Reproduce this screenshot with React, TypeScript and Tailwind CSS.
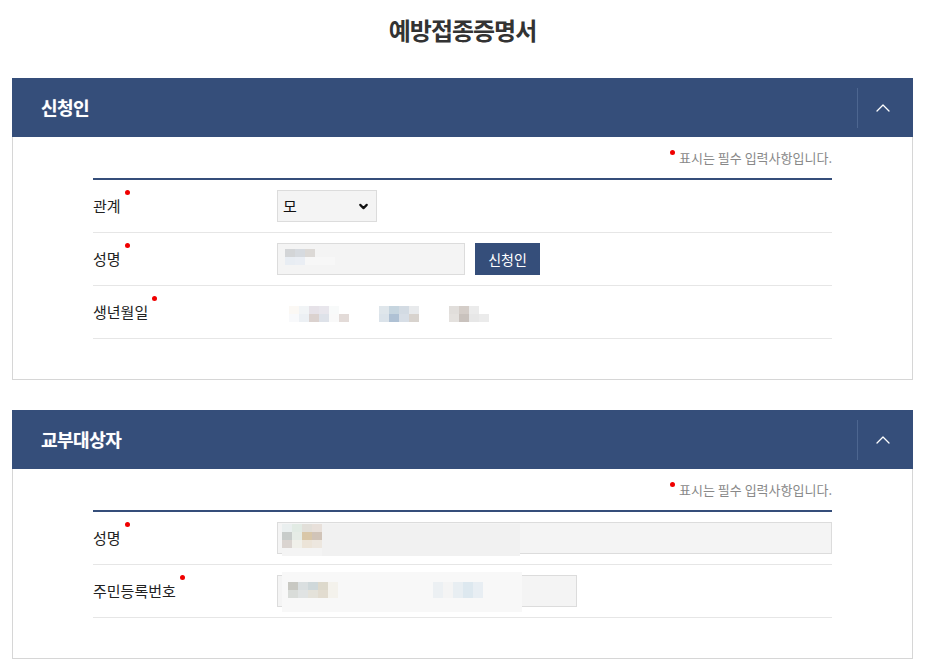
import React from 'react';
import { ChevronDown, ChevronUp } from 'lucide-react';

const FONT = { fontFamily: '"Malgun Gothic", "Noto Sans CJK KR", "Noto Sans", sans-serif' };

// Blurred privacy mask: rows of pixel blocks
function Mosaic({ cells }: { cells: string[][] }) {
  return (
    <div className="flex flex-col">
      {cells.map((row, i) => (
        <div key={i} className="flex">
          {row.map((c, j) => (
            <div key={j} className="w-[10px] h-[8px]" style={{ background: c }} />
          ))}
        </div>
      ))}
    </div>
  );
}

function Req() {
  return <span className="inline-block w-[5px] h-[5px] rounded-full bg-[#f00000] ml-[4px] relative -top-[14px]" />;
}

function Row({ label, children }: { label: string; children?: React.ReactNode }) {
  return (
    <div className="flex items-center h-[53px] border-b border-[#e6e6e6]">
      <div className="w-[184px] text-[15px] text-[#222] flex items-center">
        {label}
        <Req />
      </div>
      <div className="flex-1 flex items-center">{children}</div>
    </div>
  );
}

function Panel({ title, children }: { title: string; children: React.ReactNode }) {
  return (
    <div>
      <div className="h-[59px] bg-[#354e7a] flex items-center">
        <h2 className="flex-1 pl-[29px] text-[18px] font-bold text-white tracking-[-0.5px]" style={{ textShadow: '0 0 1px rgba(255,255,255,0.4)' }}>
          {title}
        </h2>
        <div className="h-[40px] w-px bg-[#4d6690]" />
        <button className="w-[55px] h-full flex items-center justify-center pr-[5px] text-white">
          <ChevronUp className="w-[24px] h-[24px]" strokeWidth={1.3} />
        </button>
      </div>
      <div className="border border-t-0 border-[#d6d6d6] px-[80px] pt-[11px] pb-[40px]">
        <p className="h-[20px] text-right text-[13px] text-[#888] leading-[20px] mb-[10px]">
          <span className="inline-block w-[5px] h-[5px] rounded-full bg-[#f00000] mr-[4px] relative -top-[8px]" />
          표시는 필수 입력사항입니다.
        </p>
        <div className="border-t-2 border-[#354e7a]">{children}</div>
      </div>
    </div>
  );
}

export default function App() {
  return (
    <div className="bg-white min-h-[666px] px-[12px] pb-[10px]" style={FONT}>
      <h1 className="h-[78px] pt-[14px] text-center text-[24px] leading-[32px] font-bold text-[#333] tracking-[-1px]">예방접종증명서</h1>

      <Panel title="신청인">
        <Row label="관계">
          <div className="w-[100px] h-[32px] bg-[#f4f4f4] border border-[#dcdcdc] flex items-center justify-between pl-[5px] pr-[6px] text-[15px] text-[#111]">
            모
            <ChevronDown className="w-[13px] h-[13px]" strokeWidth={4} />
          </div>
        </Row>
        <Row label="성명">
          <div className="w-[188px] h-[32px] bg-[#f4f4f4] border border-[#dcdcdc] pl-[7px] pt-[5px]">
            <Mosaic cells={[
              ['#d3d5d7', '#d6dadf', '#dcd9d6', '#f4f4f4', '#f4f4f4'],
              ['#e8edf3', '#eaeef4', '#f7f7f7', '#f7f7f7', '#f7f7f7'],
            ]} />
          </div>
          <button className="ml-[10px] w-[65px] h-[32px] bg-[#354e7a] text-white text-[14px]">신청인</button>
        </Row>
        <Row label="생년월일">
          <div className="flex items-center gap-[30px] pl-[12px] pt-[4px]">
            <Mosaic cells={[
              ['#fbf8f4', '#f1f4f6', '#e6e2e8', '#e8e6ec', '#f8fafa', '#ffffff'],
              ['#f8f9fb', '#ecf0f4', '#dbd2cf', '#dee2e9', '#f9f9f9', '#e3dbd8'],
            ]} />
            <Mosaic cells={[
              ['#dfe6eb', '#c6d5df', '#d3dbe3', '#e8eaec'],
              ['#dbe3ea', '#afc1d4', '#d7dee6', '#d8d3ce'],
            ]} />
            <Mosaic cells={[
              ['#e1dedb', '#d4cdc8', '#ebebeb', '#ffffff'],
              ['#e4e1de', '#c9c2bd', '#e7e7e7', '#ebebeb'],
            ]} />
          </div>
        </Row>
      </Panel>

      <div className="h-[30px]" />

      <Panel title="교부대상자">
        <Row label="성명">
          <div className="relative w-full h-[32px] bg-[#f4f4f4] border border-[#dcdcdc]">
            <div className="absolute left-[4px] top-[1px] flex z-10">
              <Mosaic cells={[
                ['#eaefef', '#e2ebe4', '#e2dfd9', '#e8e0da'],
                ['#c8ccca', '#e6ece6', '#d9c7a8', '#d1c4b8'],
                ['#dad4d0', '#f0f0ea', '#ece4d8', '#ede7df'],
                ['#f4f4f4', '#f4f4f4', '#f4f4f4', '#f4f4f4'],
              ]} />
              <div className="w-[198px] h-[32px] bg-[#f1f1f1]" />
            </div>
          </div>
        </Row>
        <Row label="주민등록번호">
          <div className="relative w-[300px] h-[32px] bg-[#f4f4f4] border border-[#dcdcdc]">
            <div className="absolute left-[4px] -top-[4px] w-[240px] h-[40px] bg-[#f8f8f8]" />
            <div className="absolute left-[10px] top-[6px] flex items-center">
              <Mosaic cells={[
                ['#c8c8c2', '#dadfe0', '#cfd8da', '#ddd9cc', '#f4f2ec'],
                ['#d9dcd9', '#e0e3e3', '#e4e2da', '#e2dcd0', '#f4f2ec'],
              ]} />
              <div className="ml-[95px]">
                <Mosaic cells={[
                  ['#ecf0f3', '#f4f4f4', '#e8eef2', '#dde8ef', '#e8eef3'],
                  ['#ecf0f3', '#f4f4f4', '#e8eef2', '#dde8ef', '#e8eef3'],
                ]} />
              </div>
            </div>
          </div>
        </Row>
      </Panel>
    </div>
  );
}
